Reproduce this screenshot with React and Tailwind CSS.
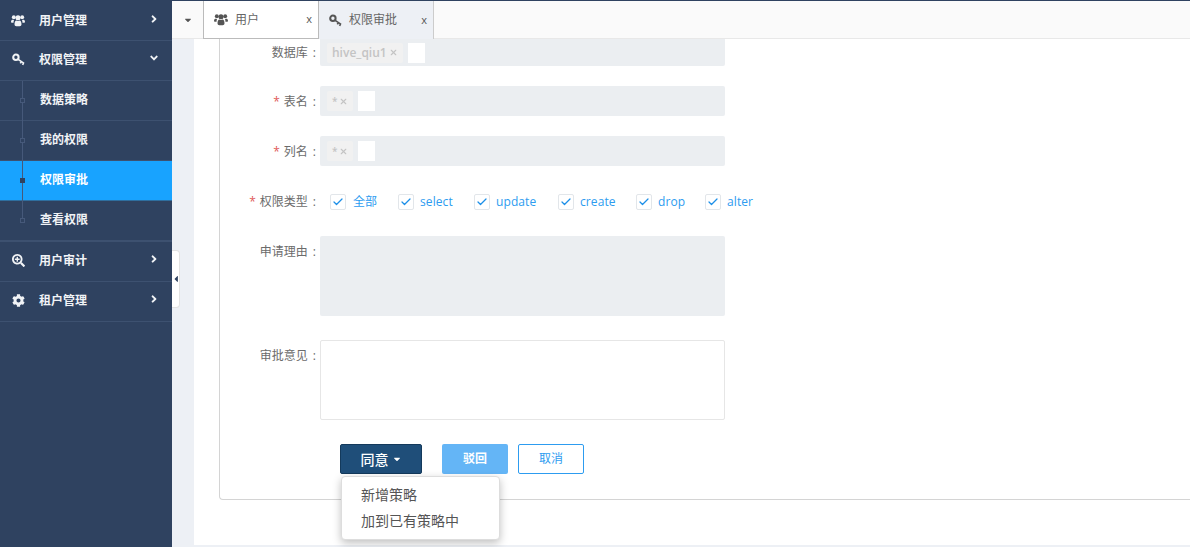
import React from 'react';
import { FaSearchPlus, FaCog, FaAngleRight, FaAngleDown, FaCaretDown, FaCaretLeft } from 'react-icons/fa';
import { Check, X } from 'lucide-react';

const font = 'font-["Open_Sans","Noto_Sans_CJK_SC",sans-serif]';

// three heads over a wide body, the old font-awesome group icon
const UsersIcon = ({ className }) => (
    <svg viewBox="0 0 16 13" fill="currentColor" className={className}>
        <circle cx="3.2" cy="2.8" r="2.2" />
        <circle cx="12.8" cy="2.8" r="2.2" />
        <circle cx="8" cy="3.4" r="2.9" />
        <path d="M0 8.2C0 6.2.9 5.6 2 5.6c.6 0 1 .3 1.5.6-.4.8-.6 1.6-.6 2.8H.9C.4 9 0 8.8 0 8.2z" />
        <path d="M16 8.2c0-2-.9-2.6-2-2.6-.6 0-1 .3-1.5.6.4.8.6 1.6.6 2.8h2c.5 0 .9-.2.9-.8z" />
        <path d="M4 10.8c0-2.9 1-4.4 2.2-4.4.5.4 1.1.7 1.8.7s1.3-.3 1.8-.7c1.2 0 2.2 1.500 2.2 4.400 0 1.400-.9 2.200-2.100 2.200H6.100C4.900 13 4 12.200 4 10.800z" />
    </svg>
);

// ring at the upper left, shaft with teeth running to the lower right
const KeyIcon = ({ className }) => (
    <svg viewBox="0 0 14 14" fill="none" stroke="currentColor" className={className}>
        <circle cx="4.2" cy="4.6" r="2.9" strokeWidth="2.2" />
        <path d="M6.6 6.8l6.4 4.400M10 9.200l-1 1.900M12.400 10.900l-1 1.900" strokeWidth="1.800" />
    </svg>
);

const MenuItem = ({ icon: Icon, label, open, first, iconSize = 'w-[13px] h-[13px]' }) => (
    <div className={`flex items-center h-[40px] border-b border-[#3d5170] pl-[11px] pr-[12px] text-[#f1f3f6] text-[12px] font-semibold ${first ? '' : 'pb-[2px]'}`}>
        <span className="flex items-center justify-center w-[14px]">
            <Icon className={`${iconSize} shrink-0`} />
        </span>
        <span className="ml-[14px] flex-1">{label}</span>
        {open ? <FaAngleDown className="w-[12px] h-[12px] -mt-[4px]" /> : <FaAngleRight className="w-[12px] h-[12px] -mt-[4px]" />}
    </div>
);

const SubItem = ({ label, active, last }) => (
    <div className={`relative flex items-center pl-[40px] pb-[2px] text-[12px] font-semibold ${last ? 'h-[41px] border-b-2' : 'h-[40px] border-b'} ${active ? 'bg-[#18a3ff] text-white border-[#2f6f9f]' : 'text-[#f1f3f6] border-[#3d5170]'}`}>
        <span className={`absolute left-[20px] top-[17px] w-[5px] h-[5px] border z-10 ${active ? 'bg-[#2f4260] border-[#2f4260]' : 'bg-[#2f4260] border-[#46597a]'}`} />
        {label}
    </div>
);

const Sidebar = () => (
    <div className="relative w-[172px] shrink-0 bg-[#2f4260]">
        <MenuItem icon={UsersIcon} label="用户管理" iconSize="w-[14px] h-[13px]" first />
        <MenuItem icon={KeyIcon} label="权限管理" iconSize="w-[13px] h-[13px]" open />
        <div className="relative">
            <SubItem label="数据策略" />
            <SubItem label="我的权限" />
            <SubItem label="权限审批" active />
            <SubItem label="查看权限" last />
            <span className="absolute left-[22px] top-0 h-[140px] w-px bg-[#46597a]" />
        </div>
        <MenuItem icon={FaSearchPlus} label="用户审计" />
        <MenuItem icon={FaCog} label="租户管理" />
    </div>
);

const Tab = ({ icon: Icon, label, active, width, iconSize }) => (
    <div className={`flex items-center h-[38px] pl-[10px] pr-[6px] border-r text-[12px] text-[#666] ${width} ${active ? 'bg-white border-l border-b border-[#bbb]' : 'bg-[#edf0f5] border-[#ccc]'}`}>
        <Icon className={`${iconSize} text-[#555] shrink-0`} />
        <span className="ml-[7px] flex-1">{label}</span>
        <span className="text-[11px] text-[#555]">x</span>
    </div>
);

const Tag = ({ text }) => (
    <span className={`flex items-center h-[20px] px-[5px] mr-[4px] rounded-[2px] bg-[#f1f1f1] text-[#c4c4c4] font-semibold ${text === '*' ? 'text-[10px]' : 'text-[12px]'}`}>
        {text}
        <X className="ml-[2px] w-[9px] h-[9px]" strokeWidth={3} />
    </span>
);

const Label = ({ text, required, className = '' }) => (
    <div className={`w-[100px] shrink-0 text-right text-[12px] text-[#6b6b6b] pr-[4px] leading-[14px] whitespace-nowrap ${className}`}>
        {required && <span className="text-[#e05a5a] mr-[4px]">*</span>}
        {text}
        <span className="ml-[5px]">:</span>
    </div>
);

const TagRow = ({ label, required, tag, clipped }) => (
    <div className={`flex ${clipped ? 'h-[27px] items-end' : 'h-[30px] mt-[20px]'}`}>
        <Label required={required} text={label} className={clipped ? 'pb-[6px]' : 'pt-[9px]'} />
        <div className={`flex items-center w-[405px] bg-[#ebeef1] rounded-b-[2px] pl-[7px] ${clipped ? 'h-[27px]' : 'h-[30px] rounded-t-[2px]'}`}>
            <Tag text={tag} />
            <span className="w-[17px] h-[20px] bg-white ml-[1px]" />
        </div>
    </div>
);

const CheckItem = ({ label, width, gap = 'ml-[6px]' }) => (
    <div className={`flex items-center ${width}`}>
        <span className="flex items-center justify-center w-[16px] h-[16px] rounded-[2px] border border-[#e2e6ea] bg-white">
            <Check className="w-[12px] h-[12px] text-[#1c8fe8]" strokeWidth={2.5} />
        </span>
        <span className={`${gap} text-[12px] tracking-[0.1px] text-[#2d9cf0]`}>{label}</span>
    </div>
);

const Form = () => (
    <div className="ml-[25px] h-[461px] w-[972px] border-l border-b border-[#d4d4d4] rounded-bl-[4px]">
        <TagRow label="数据库" tag="hive_qiu1" clipped />
        <TagRow label="表名" required tag="*" />
        <TagRow label="列名" required tag="*" />
        <div className="flex items-center h-[16px] mt-[28px]">
            <Label required text="权限类型" />
            <div className="flex items-center pl-[10px]">
                <CheckItem label="全部" width="w-[68px]" gap="ml-[7px]" />
                <CheckItem label="select" width="w-[76px]" />
                <CheckItem label="update" width="w-[84px]" />
                <CheckItem label="create" width="w-[78px]" />
                <CheckItem label="drop" width="w-[69px]" />
                <CheckItem label="alter" />
            </div>
        </div>
        <div className="flex mt-[26px]">
            <Label text="申请理由" className="pt-[9px]" />
            <div className="w-[405px] h-[80px] bg-[#ebeef1] rounded-[2px]" />
        </div>
        <div className="flex mt-[24px]">
            <Label text="审批意见" className="pt-[9px]" />
            <div className="w-[405px] h-[80px] bg-white border border-[#e6e6e6] rounded-[2px]" />
        </div>
        <div className="relative flex items-center mt-[24px] ml-[120px]">
            <div className="flex items-center justify-center w-[82px] h-[30px] bg-[#1f4e79] border border-[#143a5c] rounded-[2px] text-white text-[14px] font-medium">
                同意
                <FaCaretDown className="w-[10px] h-[10px] ml-[3px]" />
            </div>
            <div className="flex items-center justify-center w-[66px] h-[30px] ml-[20px] bg-[#64b5f6] rounded-[2px] text-white text-[12px] font-semibold">驳回</div>
            <div className="flex items-center justify-center w-[66px] h-[30px] ml-[10px] bg-white border border-[#2d9cf0] rounded-[2px] text-[#2d9cf0] text-[12px]">取消</div>
            <div className="absolute left-[1px] top-[32px] w-[159px] h-[64px] bg-white border border-[#ddd] rounded-[4px] shadow-[0_3px_8px_rgba(0,0,0,0.25)] pt-[5px] pl-[19px] text-[14px] text-[#555] leading-[26px] z-10">
                <div>新增策略</div>
                <div>加到已有策略中</div>
            </div>
        </div>
    </div>
);

const App = () => (
    <div className={`flex h-[547px] w-[1190px] overflow-hidden border-t border-[#2f4260] ${font}`}>
        <Sidebar />
        <div className="relative flex-1 flex flex-col min-w-0 bg-[#edf0f5]">
            <div className="flex h-[38px] shrink-0 bg-[#fafafa] border-b border-[#e8e8e8]">
                <div className="flex items-center justify-center w-[31px] text-[#555]">
                    <FaCaretDown className="w-[10px] h-[10px]" />
                </div>
                <Tab icon={UsersIcon} iconSize="w-[14px] h-[13px]" label="用户" active width="w-[116px]" />
                <Tab icon={KeyIcon} iconSize="w-[13px] h-[13px]" label="权限审批" width="w-[115px]" />
            </div>
            <div className="ml-[22px] h-[506px] bg-white">
                <Form />
            </div>
            <div className="absolute left-0 top-[249px] flex items-center justify-center w-[8px] h-[58px] bg-white border border-l-0 border-[#e2e2e2] rounded-r-[4px]">
                <FaCaretLeft className="w-[10px] h-[10px] text-[#2f4260] shrink-0" />
            </div>
        </div>
    </div>
);

export default App;
